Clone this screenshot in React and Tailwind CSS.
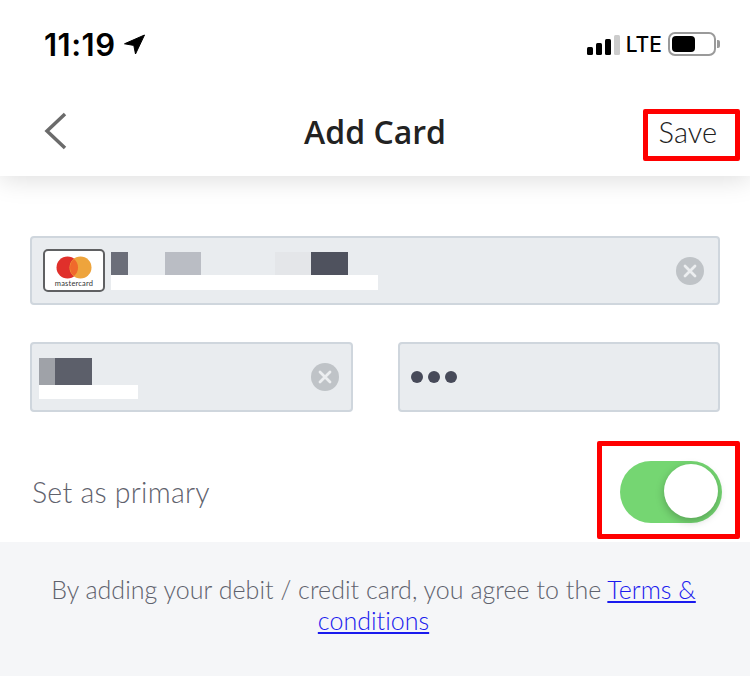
import React from "react";

const Clear = () => (
  <div className="w-7 h-7 rounded-full bg-[#bfc3c7] flex items-center justify-center shrink-0">
    <svg width="14" height="14" viewBox="0 0 14 14" fill="none" stroke="#eceef0" strokeWidth="2.8" strokeLinecap="round">
      <path d="M2 2 L12 12 M12 2 L2 12" />
    </svg>
  </div>
);

export default function App() {
  return (
    <div className="relative w-[750px] h-[676px] bg-white overflow-hidden font-['Open_Sans','Lato',sans-serif]">
      {/* Header */}
      <div className="relative z-10 h-[176px] bg-white shadow-[0_4px_24px_rgba(0,0,0,0.13)] flex flex-col">
        <div className="h-[88px] flex items-center justify-between pl-[44px] pr-[30px]">
          <div className="flex items-center gap-[8px]">
            <span className="font-['Inter',sans-serif] font-semibold text-[31px] leading-none text-black tracking-[0.5px]">11:19</span>
            <svg width="21" height="21" viewBox="0 0 21 21" className="mt-[1px]">
              <path d="M20.5 1 L11.5 20 L9.8 11.4 L0.5 9.8 Z" fill="#000" stroke="#000" strokeWidth="1" strokeLinejoin="round" />
            </svg>
          </div>
          <div className="flex items-center">
            <div className="flex items-end gap-[3px] mt-[1px]">
              <div className="w-[6px] h-[8px] rounded-[1.5px] bg-black" />
              <div className="w-[6px] h-[12px] rounded-[1.5px] bg-black" />
              <div className="w-[6px] h-[16px] rounded-[1.5px] bg-black" />
              <div className="w-[6px] h-[20px] rounded-[1.5px] bg-[#cccccc]" />
            </div>
            <span className="ml-[6px] font-['Inter',sans-serif] font-medium text-[21px] leading-none text-black">LTE</span>
            <div className="ml-[6px] w-[48px] h-[24px] rounded-[7px] border-2 border-[#9a9a9a] p-[2px]">
              <div className="w-[23px] h-full rounded-[4px] bg-black" />
            </div>
            <div className="ml-[1px] w-[3px] h-[8px] rounded-r-[2px] bg-[#9a9a9a]" />
          </div>
        </div>
        <div className="h-[88px] flex items-center pl-[44px] pr-[33px] pb-[1px]">
          <div className="flex-1 flex">
            <svg width="23" height="38" viewBox="0 0 23 38" fill="none" stroke="#6b6b6b" strokeWidth="3.5" className="mt-[-2px]">
              <path d="M21 2 L3 19 L21 36" />
            </svg>
          </div>
          <span className="font-semibold text-[32px] leading-none text-[#222] ml-[-11px]">Add Card</span>
          <div className="flex-1 flex justify-end">
            <span className="font-['Lato',sans-serif] font-light text-[29px] leading-none text-[#222]">Save</span>
          </div>
        </div>
      </div>

      {/* Form */}
      <div className="px-[30px] pt-[60px]">
        <div className="h-[69px] rounded-[4px] border-2 border-[#cfd6dd] bg-[#e9ecef] flex items-center pl-[11px] pr-[14px]">
          <div className="w-[62px] h-[43px] rounded-[5px] border-2 border-[#5f6062] bg-white flex flex-col items-center shrink-0">
            <svg width="36" height="23" viewBox="0 0 36 23" className="mt-[5px]">
              <circle cx="11.5" cy="11.5" r="11" fill="#e0302b" />
              <circle cx="24.5" cy="11.5" r="11" fill="#eea43c" />
              <path d="M18 3 A11 11 0 0 1 18 20 A11 11 0 0 1 18 3 Z" fill="#f0692c" />
            </svg>
            <span className="font-['Lato',sans-serif] text-[7.5px] leading-[8px] tracking-[0.2px] text-[#333] mt-[1px]">mastercard</span>
          </div>
          <div className="ml-[6px] flex flex-col self-start mt-[14px]">
            <div className="flex h-[23px]">
              <div className="w-[17px] bg-[#6b6e79]" />
              <div className="w-[36px] ml-[37px] bg-[#babdc4]" />
              <div className="w-[36px] ml-[74px] bg-[#e4e6e9]" />
              <div className="w-[37px] bg-[#4f525e]" />
            </div>
            <div className="w-[267px] h-[15px] bg-white" />
          </div>
          <div className="ml-auto">
            <Clear />
          </div>
        </div>

        <div className="mt-[37px] flex justify-between">
          <div className="w-[323px] h-[70px] rounded-[4px] border-2 border-[#cfd6dd] bg-[#e9ecef] flex items-center pl-[7px] pr-[12px]">
            <div className="flex flex-col self-start mt-[14px]">
              <div className="flex h-[27px]">
                <div className="w-[16px] bg-[#9fa2a8]" />
                <div className="w-[37px] bg-[#5c5f6a]" />
              </div>
              <div className="w-[99px] h-[14px] bg-white" />
            </div>
            <div className="ml-auto">
              <Clear />
            </div>
          </div>
          <div className="w-[322px] h-[70px] rounded-[4px] border-2 border-[#cfd6dd] bg-[#e9ecef] flex items-center pl-[11px] gap-[5px]">
            <div className="w-3 h-3 rounded-full bg-[#474a59]" />
            <div className="w-3 h-3 rounded-full bg-[#474a59]" />
            <div className="w-3 h-3 rounded-full bg-[#474a59]" />
          </div>
        </div>

        <div className="h-[130px] flex items-center justify-between pl-[2px] pt-[32px] pb-[2px]">
          <span className="font-['Lato',sans-serif] font-light text-[28.5px] leading-none text-[#5f626d] tracking-[0.25px]">Set as primary</span>
          <div className="relative w-[102px] h-[62px] rounded-full bg-[#75d672] mr-[-2px]">
            <div className="absolute right-[4px] top-[3px] w-[54px] h-[54px] rounded-full bg-white shadow-[0_3px_8px_rgba(0,0,0,0.25)]" />
          </div>
        </div>
      </div>

      {/* Footer */}
      <div className="absolute left-0 right-0 bottom-0 h-[134px] bg-[#f5f6f8] pl-[37px] pr-[40px] pt-[32px] text-center font-['Lato',sans-serif] font-light text-[25px] leading-[31px] tracking-[0.03px] text-[#5f626d]">
        <div>By adding your debit / credit card, you agree to the <span className="text-[#1a1aee] underline">Terms &amp;</span></div>
        <div className="text-[#1a1aee] underline">conditions</div>
      </div>

      {/* Annotation boxes */}
      <div className="absolute z-20 left-[643px] top-[109px] w-[97px] h-[52px] border-[5px] border-[#ff0000] rounded-[2px]" />
      <div className="absolute z-20 left-[597px] top-[441px] w-[143px] h-[98px] border-[5px] border-[#ff0000] rounded-[2px]" />
    </div>
  );
}
